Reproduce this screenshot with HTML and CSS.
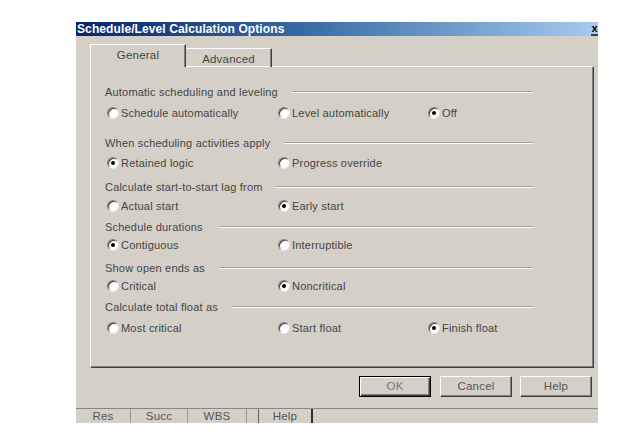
FILE: index.html
```html
<!DOCTYPE html>
<html>
<head>
<meta charset="utf-8">
<link rel="stylesheet" href="styles.css">
</head>
<body>
<div class="dialog">
  <div class="titlebar">
    <span class="title">Schedule/Level Calculation Options</span>
    <span class="close">x</span>
  </div>
  <div class="content">
    <div class="tabs">
      <div class="tab active">General</div>
      <div class="tab">Advanced</div>
    </div>
    <div class="panel">
      <div class="group">
        <div class="hdr"><span>Automatic scheduling and leveling</span><i class="etch"></i></div>
        <div class="opts">
          <label class="radio"><b class="dot"></b>Schedule automatically</label>
          <label class="radio"><b class="dot"></b>Level automatically</label>
          <label class="radio"><b class="dot on"></b>Off</label>
        </div>
      </div>
      <div class="group">
        <div class="hdr"><span>When scheduling activities apply</span><i class="etch"></i></div>
        <div class="opts">
          <label class="radio"><b class="dot on"></b>Retained logic</label>
          <label class="radio"><b class="dot"></b>Progress override</label>
        </div>
      </div>
      <div class="group">
        <div class="hdr"><span>Calculate start-to-start lag from</span><i class="etch"></i></div>
        <div class="opts">
          <label class="radio"><b class="dot"></b>Actual start</label>
          <label class="radio"><b class="dot on"></b>Early start</label>
        </div>
      </div>
      <div class="group">
        <div class="hdr"><span>Schedule durations</span><i class="etch"></i></div>
        <div class="opts">
          <label class="radio"><b class="dot on"></b>Contiguous</label>
          <label class="radio"><b class="dot"></b>Interruptible</label>
        </div>
      </div>
      <div class="group">
        <div class="hdr"><span>Show open ends as</span><i class="etch"></i></div>
        <div class="opts">
          <label class="radio"><b class="dot"></b>Critical</label>
          <label class="radio"><b class="dot on"></b>Noncritical</label>
        </div>
      </div>
      <div class="group">
        <div class="hdr"><span>Calculate total float as</span><i class="etch"></i></div>
        <div class="opts">
          <label class="radio"><b class="dot"></b>Most critical</label>
          <label class="radio"><b class="dot"></b>Start float</label>
          <label class="radio"><b class="dot on"></b>Finish float</label>
        </div>
      </div>
    </div>
    <div class="buttons">
      <div class="btn default">OK</div>
      <div class="btn">Cancel</div>
      <div class="btn">Help</div>
    </div>
  </div>
  <div class="strip">
    <div class="st s-res">Res</div>
    <div class="st s-succ">Succ</div>
    <div class="st s-wbs">WBS</div>
    <div class="st s-empty"></div>
    <div class="st s-help">Help</div>
  </div>
</div>
</body>
</html>
```

FILE: styles.css
```css
* { box-sizing: border-box; }
html, body { margin: 0; padding: 0; background: #fff; }
body {
  width: 640px; height: 441px; overflow: hidden;
  font-family: "Liberation Sans", Arial, sans-serif;
  font-size: 11px; color: #444;
  letter-spacing: 0.2px;
}
.dialog {
  margin: 22px 0 0 76px;
  width: 522px;
  background: #d4d0c8;
}
.titlebar {
  height: 14px;
  display: flex; align-items: center; justify-content: space-between;
  background: linear-gradient(to right, #0a246a 0%, #3a6ea5 45%, #a6caf0 100%);
}
.title {
  color: #fff; font-weight: bold; font-size: 12px; line-height: 14px;
  padding-left: 1px; letter-spacing: 0.1px;
}
.close {
  width: 7px; height: 14px;
  font-weight: bold; font-size: 11px; line-height: 12px; color: #000;
  border-bottom: 2px solid #404040; text-align: center; letter-spacing: 0;
}
.content {
  height: 372px;
  padding: 8px 4px 0 14px;
}
.tabs {
  display: flex; align-items: flex-end;
  height: 23px; margin-bottom: -1px;
  position: relative; z-index: 2;
}
.tab {
  width: 86px; height: 19px;
  border-top: 1px solid #fff;
  border-right: 1px solid #404040;
  box-shadow: inset -1px 0 0 #808080;
  text-align: center; line-height: 19px; font-size: 11.5px;
  padding-top: 1px;
}
.tab.active {
  width: 96px; height: 23px;
  border-left: 1px solid #fff;
  border-top: 1px solid #fff;
  border-right: 1px solid #404040;
  background: #d4d0c8;
  line-height: 20px; padding-top: 0;
}
.panel {
  width: 504px; height: 302px;
  border-left: 1px solid #fff; border-top: 1px solid #fff;
  border-right: 1px solid #404040; border-bottom: 1px solid #404040;
  box-shadow: inset -1px -1px 0 #808080;
}
.group:nth-child(1) { padding-top: 16px; }
.group:nth-child(2) { margin-top: 12px; }
.group:nth-child(3) { margin-top: 6px; }
.group:nth-child(4) { margin-top: 3px; }
.group:nth-child(5) { margin-top: 5px; }
.group:nth-child(6) { margin-top: 3px; }
.group:nth-child(1) .opts { margin-top: 3px; }
.group:nth-child(2) .opts { margin-top: 2px; }
.group:nth-child(3) .opts { margin-top: 1px; }
.group:nth-child(6) .opts { margin-top: 3px; }
.hdr {
  height: 18px;
  display: flex; align-items: center; gap: 14px;
  padding: 0 60px 0 14px;
  white-space: nowrap;
}
.etch {
  flex: 1; height: 2px;
  border-top: 1px solid #a29f99; border-bottom: 1px solid #fff;
}
.group:nth-child(4) .etch { margin-left: 4px; }
.opts {
  height: 18px;
  display: grid; grid-template-columns: 171px 150px auto;
  align-items: center;
  padding-left: 16px;
}
.radio { display: flex; align-items: center; gap: 2px; white-space: nowrap; }
.dot {
  width: 12px; height: 12px; border-radius: 50%;
  background: #fff;
  border: 1px solid; border-color: #808080 #e8e6e2 #e8e6e2 #808080;
  box-shadow: inset 1px 1px 0 #404040;
  display: flex; align-items: center; justify-content: center;
}
.dot.on::after {
  content: ""; width: 4px; height: 4px; border-radius: 50%; background: #000;
}
.buttons {
  display: flex; justify-content: flex-end; gap: 8px;
  margin-top: 8px; padding-right: 2px;
}
.btn {
  width: 72px; height: 21px;
  border-left: 1px solid #fff; border-top: 1px solid #fff;
  border-right: 1px solid #404040; border-bottom: 1px solid #404040;
  box-shadow: inset -1px -1px 0 #808080;
  text-align: center; line-height: 19px; font-size: 11.5px; color: #555;
}
.btn:nth-child(2) { margin-left: 1px; }
.btn.default {
  border: 1px solid #000;
  box-shadow: inset 1px 1px 0 #fff, inset -1px -1px 0 #404040, inset -2px -2px 0 #808080;
  color: #777;
}
.strip {
  height: 15px;
  display: flex;
  border-top: 1px solid #8a8782;
  background: #d4d0c8;
  font-size: 11.5px; color: #555; line-height: 14px;
}
.st { text-align: center; border-right: 1px solid #9a9792; }
.s-res { width: 55px; }
.s-succ { width: 57px; }
.s-wbs { width: 59px; }
.s-empty { width: 12px; border-right-color: #606060; }
.s-help { width: 54px; border-right: 2px solid #303030; }
```
